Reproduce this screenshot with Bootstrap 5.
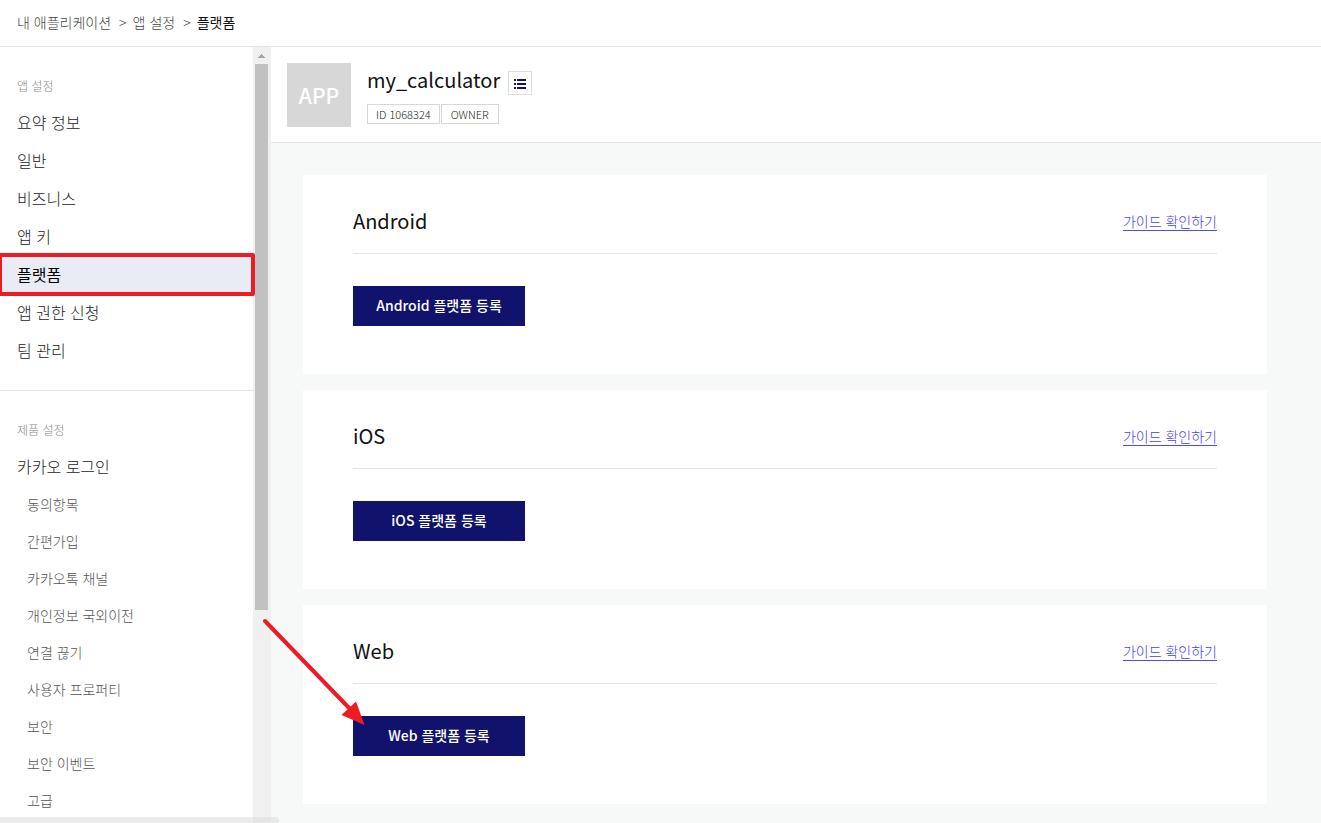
<!DOCTYPE html>
<html lang="ko">
<head>
<meta charset="utf-8">
<meta name="viewport" content="width=device-width, initial-scale=1">
<title>플랫폼</title>
<link href="https://cdn.jsdelivr.net/npm/bootstrap@5.3.0/dist/css/bootstrap.min.css" rel="stylesheet">
<style>
  body { font-family: "Noto Sans CJK KR", sans-serif; font-size: 14px; line-height: 20px; color: #111; background: #fff; }
  a { color: inherit; text-decoration: none; }
  .topbar { height: 47px; border-bottom: 1px solid #e4e4e4; padding: 0 17px 2px; font-weight: 300; color: #444; }
  .crumbs li + li::before { content: ">"; margin: 0 6px 0 8px; }
  .crumbs .current { color: #111; font-weight: 400; }
  .side { width: 271px; }
  .menu-group { padding: 29px 0 21px; border-bottom: 1px solid #e4e4e4; }
  .menu-label { font-size: 12px; line-height: 20px; color: #888; margin: 0 0 7px; padding: 0 17px; font-weight: 300; }
  .menu-item { display: block; font-size: 16px; line-height: 38px; padding: 0 17px; color: #222; font-weight: 300; }
  .menu-item.current { background: #e9ecf5; color: #000; font-weight: 400; }
  .menu-item.current::after { content: ""; position: absolute; inset: -2px -2px -3px; border: 4px solid #ed1c24; border-radius: 2px; z-index: 2; }
  .menu-subs { padding-top: 1px; }
  .menu-sub { display: block; font-size: 14px; line-height: 37px; padding: 0 27px; color: #555; font-weight: 300; }
  .track { width: 18px; background: #f0f0f0; padding: 7px 3px 0 2px; }
  .track svg { display: block; margin: 0 auto 6px; }
  .thumb { width: 13px; background: #c1c1c1; }
  .app-head { padding: 16px 16px 15px; border-bottom: 1px solid #e4e4e4; background: #fff; }
  .app-icon { width: 64px; height: 64px; background: #d7d7d7; color: #fff; font-size: 21px; font-weight: 500; }
  .app-title { padding-top: 3px; margin-bottom: 6px; }
  .app-name { font-size: 20px; line-height: 28px; font-weight: 400; margin: 0; padding-bottom: 4px; }
  .list-btn { width: 24px; height: 24px; border: 1px solid #dedede; background: #fff; padding: 1px 0 0; margin-top: 2px; }
  .tags { gap: 1px; }
  .tag { height: 20px; border: 1px solid #d7d7d7; font-size: 11px; line-height: 18px; color: #222; font-weight: 300; padding: 0 8px; }
  .tag-role { padding: 0 9px; }
  .content-area { background: #f7f9f9; padding: 32px 54px 20px 32px; }
  .panel { background: #fff; padding: 24px 50px 48px; }
  .panel-head { height: 55px; border-bottom: 1px solid #e4e4e4; margin-bottom: 32px; padding-bottom: 10px; }
  .panel-head h2 { font-size: 20px; line-height: 32px; font-weight: 400; margin: 0; }
  .panel-head a { font-weight: 300; color: #3f41f5; line-height: 18px; border-bottom: 1px solid #4a4cf5; }
  .btn-register, .btn-register:hover { width: 172px; height: 40px; background: #11126b; color: #fff; border: 0; border-radius: 0; font-size: 14px; line-height: 20px; font-weight: 500; padding: 0 0 2px; }
  .pointer { left: -92px; top: -99px; pointer-events: none; z-index: 3; }
  .status { left: 0; bottom: 0; width: 279px; height: 6px; background: rgba(218,218,218,.5); border-top-right-radius: 3px; }
</style>
</head>
<body>
<div class="vh-100 d-flex flex-column overflow-hidden position-relative">
  <header class="topbar d-flex align-items-center flex-shrink-0">
    <nav aria-label="경로">
      <ol class="crumbs list-unstyled d-flex m-0">
        <li><a href="#">내 애플리케이션</a></li>
        <li><a href="#">앱 설정</a></li>
        <li><a href="#" class="current">플랫폼</a></li>
      </ol>
    </nav>
  </header>

  <div class="d-flex flex-grow-1 overflow-hidden">
    <aside class="side d-flex flex-shrink-0">
      <nav class="flex-grow-1">
        <div class="menu-group">
          <p class="menu-label">앱 설정</p>
          <a class="menu-item" href="#">요약 정보</a>
          <a class="menu-item" href="#">일반</a>
          <a class="menu-item" href="#">비즈니스</a>
          <a class="menu-item" href="#">앱 키</a>
          <a class="menu-item current position-relative" href="#" aria-current="page">플랫폼</a>
          <a class="menu-item" href="#">앱 권한 신청</a>
          <a class="menu-item" href="#">팀 관리</a>
        </div>
        <div class="menu-group">
          <p class="menu-label">제품 설정</p>
          <a class="menu-item" href="#">카카오 로그인</a>
          <div class="menu-subs">
            <a class="menu-sub" href="#">동의항목</a>
            <a class="menu-sub" href="#">간편가입</a>
            <a class="menu-sub" href="#">카카오톡 채널</a>
            <a class="menu-sub" href="#">개인정보 국외이전</a>
            <a class="menu-sub" href="#">연결 끊기</a>
            <a class="menu-sub" href="#">사용자 프로퍼티</a>
            <a class="menu-sub" href="#">보안</a>
            <a class="menu-sub" href="#">보안 이벤트</a>
            <a class="menu-sub" href="#">고급</a>
          </div>
        </div>
      </nav>
      <div class="track vh-100 flex-shrink-0" aria-hidden="true">
        <svg width="7" height="4" viewBox="0 0 7 4"><path d="M3 0h1v1h1v1h1v1h1v1H0V3h1V2h1V1h1z" fill="#a3a3a3"/></svg>
        <div class="thumb" style="height:66.4vh"></div>
      </div>
    </aside>

    <main class="flex-grow-1 d-flex flex-column">
      <div class="app-head d-flex gap-3">
        <div class="app-icon d-flex align-items-center justify-content-center">APP</div>
        <div>
          <div class="app-title d-flex align-items-center">
            <h1 class="app-name me-2">my_calculator</h1>
            <button type="button" class="list-btn d-flex align-items-center justify-content-center" aria-label="앱 목록">
              <svg width="12" height="10" viewBox="0 0 12 10" fill="#11126b"><path d="M0 0h2v2H0zM3 0h9v2H3zM0 4h2v2H0zM3 4h9v2H3zM0 8h2v2H0zM3 8h9v2H3z"/></svg>
            </button>
          </div>
          <div class="tags d-flex">
            <span class="tag d-flex align-items-center">ID 1068324</span>
            <span class="tag tag-role d-flex align-items-center">OWNER</span>
          </div>
        </div>
      </div>

      <div class="content-area d-flex flex-column gap-3 flex-grow-1">
        <section class="panel">
          <div class="panel-head d-flex align-items-center justify-content-between">
            <h2>Android</h2><a href="#">가이드 확인하기</a>
          </div>
          <button type="button" class="btn btn-register">Android 플랫폼 등록</button>
        </section>
        <section class="panel">
          <div class="panel-head d-flex align-items-center justify-content-between">
            <h2>iOS</h2><a href="#">가이드 확인하기</a>
          </div>
          <button type="button" class="btn btn-register">iOS 플랫폼 등록</button>
        </section>
        <section class="panel">
          <div class="panel-head d-flex align-items-center justify-content-between">
            <h2>Web</h2><a href="#">가이드 확인하기</a>
          </div>
          <div class="position-relative d-flex">
            <button type="button" class="btn btn-register">Web 플랫폼 등록</button>
            <svg class="pointer position-absolute" width="106" height="110" viewBox="0 0 106 110" aria-hidden="true">
              <path d="M4 4L91 94" stroke="#ed1c24" stroke-width="4" stroke-linecap="round"/>
              <path d="M103.500 108L80.500 98L95 84.500z" fill="#ed1c24"/>
            </svg>
          </div>
        </section>
      </div>
    </main>
  </div>
  <div class="status position-absolute" aria-hidden="true"></div>
</div>
<script src="https://cdn.jsdelivr.net/npm/bootstrap@5.3.0/dist/js/bootstrap.bundle.min.js"></script>
</body>
</html>
